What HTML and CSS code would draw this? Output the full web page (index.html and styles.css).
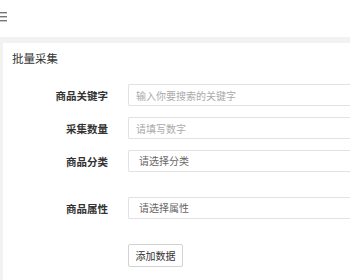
FILE: index.html
```html
<!DOCTYPE html>
<html lang="zh">
<head>
<meta charset="utf-8">
<link rel="stylesheet" href="styles.css">
</head>
<body>
<header class="topbar">
  <svg class="menu-icon" width="8" height="10" viewBox="0 0 8 10"><rect x="0" y="0" width="7" height="1.4" fill="#777"/><rect x="0" y="4" width="7" height="1.4" fill="#777"/><rect x="0" y="8" width="7" height="1.4" fill="#777"/></svg>
</header>
<main class="main">
  <section class="card">
    <div class="card-header">批量采集</div>
    <div class="card-body">
      <div class="row">
        <label class="label">商品关键字</label>
        <input class="input" type="text" placeholder="输入你要搜索的关键字">
      </div>
      <div class="row">
        <label class="label">采集数量</label>
        <input class="input" type="text" placeholder="请填写数字">
      </div>
      <div class="row row-gap">
        <label class="label">商品分类</label>
        <div class="select">请选择分类</div>
      </div>
      <div class="row row-gap">
        <label class="label">商品属性</label>
        <div class="select">请选择属性</div>
      </div>
      <div class="row">
        <span class="label"></span>
        <button class="btn" type="button">添加数据</button>
      </div>
    </div>
  </section>
</main>
</body>
</html>
```
FILE: styles.css
```css
html, body {
  margin: 0;
  padding: 0;
  overflow: hidden;
  height: 100%;
}
body {
  font-family: "Noto Sans CJK SC", "Noto Sans", sans-serif;
  color: #333;
  background: #f2f2f2;
  display: flex;
  flex-direction: column;
}
.topbar {
  height: 37px;
  flex: none;
  background: #fff;
  display: flex;
  align-items: flex-start;
}
.menu-icon {
  display: block;
  margin-top: 12px;
}
.main {
  flex: 1;
  min-height: 0;
  padding: 6px 0 0 3px;
  display: flex;
  flex-direction: column;
}
.card {
  flex: 1;
  background: #fff;
}
.card-header {
  height: 31px;
  line-height: 31px;
  padding-left: 9px;
  font-size: 11.5px;
  color: #333;
}
.card-body {
  padding-top: 10px;
}
.row {
  display: flex;
  align-items: center;
  margin-bottom: 11px;
}
.row-gap {
  margin-bottom: 25px;
}
.label {
  width: 105px;
  text-align: right;
  font-size: 10.5px;
  font-weight: bold;
  color: #333;
  margin-right: 20px;
  flex: none;
}
.input, .select {
  flex: 1;
  min-width: 0;
  box-sizing: border-box;
  height: 22px;
  border: 1px solid #e2e2e2;
  border-right: none;
  border-radius: 2px 0 0 2px;
  font-family: inherit;
  font-size: 10px;
  background: #fff;
  outline: none;
}
.input {
  padding: 0 0 0 7px;
  color: #333;
}
.input::placeholder {
  color: #aaa;
}
.select {
  padding-left: 10px;
  line-height: 20px;
  color: #666;
}
.btn {
  height: 23px;
  width: 55px;
  padding: 0;
  box-sizing: border-box;
  border: 1px solid #d2d2d2;
  border-radius: 2px;
  background: #fff;
  font-family: inherit;
  font-size: 10px;
  color: #333;
}
```
